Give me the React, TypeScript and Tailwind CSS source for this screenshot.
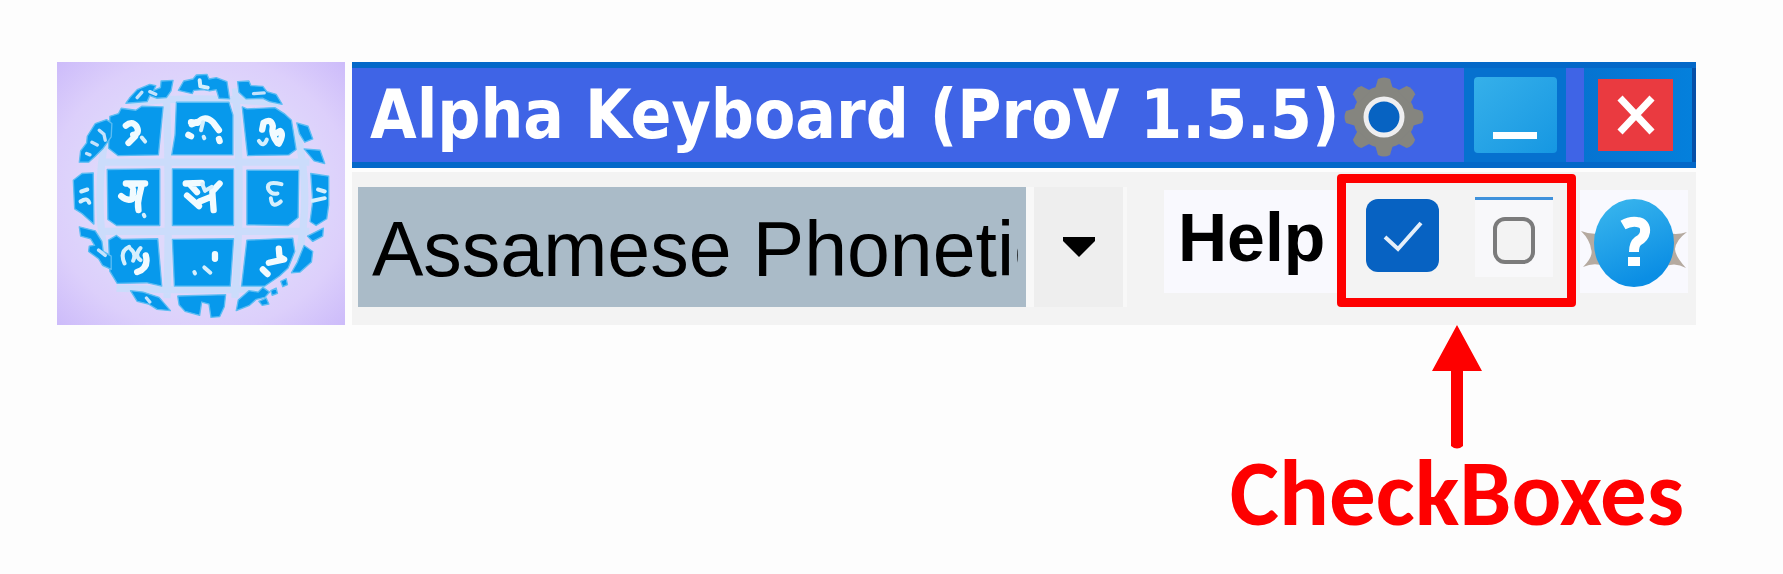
import { useState } from 'react';

const tiles = [
  // outer ring, top
  'M228 145 L240 128 262 104 300 88 318 92 312 106 332 98 334 78 370 76 364 108 350 128 322 130 300 122 292 140Z',
  'M386 106 L402 78 430 72 440 60 472 58 478 72 500 68 532 80 540 132 508 130 500 104 480 108 462 104 432 106 428 116Z',
  'M564 80 L598 78 604 92 640 94 652 110 680 118 698 148 660 140 640 130 590 132 568 112Z',
  // middle tiles
  'M180 184 L206 176 214 160 258 166 276 154 340 156 326 300 204 302 176 280Z',
  'M380 142 L538 142 550 180 550 300 366 300 376 240Z',
  'M578 156 L592 162 676 158 704 176 726 196 740 284 718 300 594 302Z',
  'M172 344 L330 342 330 512 200 512 174 494Z',
  'M368 342 L552 342 552 512 368 512Z',
  'M592 346 L748 346 746 488 716 512 592 510Z',
  'M176 556 L200 542 216 554 324 552 336 694 290 684 202 686 180 650Z',
  'M368 554 L552 552 542 694 374 694Z',
  'M592 556 L730 550 736 590 716 640 690 664 646 694 576 694Z',
  // outer ring, sides
  'M88 322 L92 288 110 264 112 244 136 206 170 194 186 206 184 246 160 280 136 304 116 322Z',
  'M70 376 L96 356 130 354 132 508 96 476 74 462Z',
  'M88 516 L136 528 156 560 160 590 184 604 184 644 158 632 146 612 116 590 118 574 134 572 122 552 92 544Z',
  'M742 204 L776 214 790 252 766 262 750 236Z',
  'M764 282 L812 286 826 326 794 318Z',
  'M784 356 L838 364 838 450 832 492 800 512 782 500 790 440Z',
  'M774 544 L822 520 820 544 790 560Z',
  'M764 572 L790 590 786 622 752 652 726 654 744 622Z',
  // outer ring, bottom
  'M242 708 L280 712 328 728 362 768 322 764 296 748 262 740Z',
  'M384 724 L528 720 524 756 510 786 484 788 478 748 456 742 450 782 406 770 388 750Z',
  'M560 768 L566 736 598 708 626 712 640 698 660 712 646 728 620 734 600 752Z',
  'M628 740 L650 730 658 748 638 752Z M664 708 L680 700 684 716 668 722Z M694 680 L710 672 714 690 700 696Z',
];

const marks = [
  'M228 212 Q246 196 260 214 Q272 236 250 240 M256 244 L236 264',
  'M424 202 L444 204 Q466 178 490 202 L508 226 M446 200 L426 208 M416 240 L424 244 M508 252 L510 258',
  'M638 224 L642 204 Q664 188 670 214 Q664 240 684 264 M688 266 Q704 238 692 228 L682 234',
  'M228 386 L286 386 M236 386 L248 396 M276 390 L268 424 Q262 446 266 466 M214 424 Q232 440 248 432 L250 406',
  'M408 386 L456 384 M510 386 L488 410 490 440 492 466 M420 388 L442 412 M412 422 L448 454 M450 440 L484 426',
  'M262 652 Q298 640 288 602',
  'M496 598 L496 612',
  'M688 582 L690 606 704 614 658 624 M640 644 L654 658',
];

const fineMarks = [
  'M276 248 L286 260 M282 480 L284 484',
  'M460 202 L454 226 M462 246 L464 250',
  'M628 258 Q642 280 652 254',
  'M458 388 L466 408 L486 396',
  'M696 388 Q650 376 656 402 Q664 420 684 416 M664 430 Q668 464 694 440',
  'M238 576 Q208 590 224 626 M242 582 Q260 596 250 618 M272 580 Q252 602 272 616',
  'M464 638 L482 654 M434 652 L436 656',
  'M94 410 L112 404 M92 440 Q112 426 118 444 M450 76 L452 94 474 98 M806 404 L826 410 M790 438 L826 430',
];

function GlobeLogo() {
  return (
    <svg viewBox="21 21 866 790" preserveAspectRatio="none" className="block h-[263px] w-[288px] shrink-0" role="img" aria-label="Alpha Keyboard">
      <defs>
        <radialGradient id="backdrop" r="0.7">
          <stop offset="0.5" stopColor="#dfd9fb" />
          <stop offset="0.75" stopColor="#dccffb" />
          <stop offset="1" stopColor="#cdbcfa" />
        </radialGradient>
      </defs>
      <rect x="21" y="21" width="866" height="790" fill="url(#backdrop)" />
      <path
        d="M350 110 Q360 420 352 730 M558 100 Q580 420 556 730 M150 322 H780 M150 530 H780 M240 142 Q460 120 690 146 M200 700 Q460 710 650 700 M170 230 Q130 420 170 640 M740 220 Q790 420 744 620"
        fill="none"
        stroke="#cbdcfb"
        strokeWidth="22"
      />
      <g fill="#0799ec" stroke="#5cbdf3" strokeWidth="4" strokeLinejoin="round">
        {tiles.map((d) => (
          <path key={d} d={d} />
        ))}
      </g>
      <g fill="none" stroke="#f1fbff" strokeLinecap="round" strokeLinejoin="round">
        {marks.map((d) => (
          <path key={d} d={d} strokeWidth="19" />
        ))}
        {fineMarks.map((d) => (
          <path key={d} d={d} strokeWidth="12" stroke="#d5effd" />
        ))}
      </g>
      <path
        d="M262 128 L276 112 M300 110 L318 118 M126 262 L142 270 M148 226 L162 238 166 256 M110 296 L120 300 M612 116 L644 114 M146 586 L166 602 M290 730 L300 742"
        fill="none"
        stroke="#c4e2fc"
        strokeWidth="10"
        strokeLinecap="round"
      />
    </svg>
  );
}

function GearIcon() {
  return (
    <svg viewBox="0 0 80 80" className="block size-20">
      <g fill="#85857f">
        <circle cx="40" cy="40" r="31" />
        {[0, 45, 90, 135, 180, 225, 270, 315].map((angle) => (
          <path key={angle} d="M31 12 L34 2 Q40 -1 46 2 L49 12Z" transform={`rotate(${angle} 40 40)`} />
        ))}
      </g>
      <circle cx="40" cy="40" r="18" fill="#0763c2" stroke="#eeeef0" strokeWidth="5" />
    </svg>
  );
}

function TitleBar() {
  return (
    <header className="flex h-[106px] border-y-[6px] border-[#0468c8] bg-[#3f64e6]">
      <h1 className="ml-[18px] min-w-0 flex-1 overflow-hidden whitespace-nowrap font-['DejaVu_Sans_Condensed','DejaVu_Sans',sans-serif] text-[67px] leading-[94px] font-bold text-white">
        Alpha Keyboard (ProV 1.5.5)
      </h1>
      <button type="button" aria-label="Settings" className="mr-10 ml-1 flex shrink-0 items-center pt-1">
        <GearIcon />
      </button>
      <div className="flex w-[102px] shrink-0 items-center justify-center bg-[#0671cf]">
        <button type="button" aria-label="Minimize" className="flex h-[76px] w-[83px] items-end justify-center rounded bg-linear-to-br from-[#35b0ea] to-[#1597e2] pb-3.5">
          <span className="h-[7px] w-11 bg-white" />
        </button>
      </div>
      <div className="flex shrink-0 items-center border-r-4 border-[#0750a8] bg-linear-to-r from-[#0671cf] to-[#0480dc] pr-[19px] pl-8 shadow-[inset_18px_0_0_#3f64e6]">
        <button type="button" aria-label="Close" className="flex h-[72px] w-[75px] items-center justify-center bg-[#ea3a40]">
          <svg viewBox="0 0 40 40" className="size-10">
            <path d="M4 3 L36 37 M36 3 L4 37" stroke="#fff" strokeWidth="7" />
          </svg>
        </button>
      </div>
    </header>
  );
}

function LayoutPicker() {
  return (
    <div className="flex min-w-0 flex-1 gap-2 bg-[#f8f8f8] pr-1">
      <select
        aria-label="Keyboard layout"
        className="h-[120px] min-w-0 flex-1 appearance-none overflow-hidden border-r-8 border-[#aabbc8] bg-[#aabbc8] pt-1 pl-3.5 font-['Liberation_Sans',Arial,sans-serif] text-[77px] leading-[116px] text-black"
      >
        <option>Assamese Phonetic</option>
      </select>
      <button type="button" aria-label="Show layouts" className="flex h-[120px] w-[89px] shrink-0 items-center justify-center bg-[#eeeeee]">
        <svg viewBox="0 0 32 20" className="h-5 w-8">
          <path d="M0 0 H32 V4 L16 20 L0 4Z" fill="#000" />
        </svg>
      </button>
    </div>
  );
}

function CheckBoxes() {
  const [enabled, setEnabled] = useState(true);
  const [secondary, setSecondary] = useState(false);

  return (
    <div className="flex h-[133px] w-[239px] shrink-0 items-start rounded border-[9px] border-[#fe0000] pt-3.5 pl-5">
      <label className="relative mt-0.5 block size-[73px]">
        <input
          type="checkbox"
          aria-label="Enable keyboard"
          checked={enabled}
          onChange={(e) => setEnabled(e.target.checked)}
          className="block size-full appearance-none rounded-xl bg-white checked:bg-[#0762c2]"
        />
        <svg viewBox="0 0 73 73" className="pointer-events-none absolute inset-0">
          <path d="M19 38 L32 50 L55 24" fill="none" stroke="#e4effa" strokeWidth="4" />
        </svg>
      </label>
      <label className="ml-9 flex h-20 w-[78px] justify-center border-t-[3px] border-[#3f92dc] bg-[#f8f8fa] pt-[17px]">
        <input
          type="checkbox"
          aria-label="Show hints"
          checked={secondary}
          onChange={(e) => setSecondary(e.target.checked)}
          className="block h-[47px] w-[42px] appearance-none rounded-xl border-4 border-[#7b7b7b] bg-[#f3f3f3] checked:bg-[#0762c2]"
        />
      </label>
    </div>
  );
}

function HelpButton() {
  return (
    <button type="button" aria-label="Help" className="mr-2 ml-1 flex h-[103px] w-[108px] shrink-0 items-center bg-[#f9f9fe]">
      <svg viewBox="0 0 108 103" className="block">
        <defs>
          <linearGradient id="badge" x1="0" y1="0" x2="0.4" y2="1">
            <stop offset="0" stopColor="#3cb8ee" />
            <stop offset="1" stopColor="#0b8ee4" />
          </linearGradient>
        </defs>
        <path d="M1 41 Q14 46 24 42 V76 Q14 72 3 77 Q14 66 11 59 Q10 50 1 41Z M107 42 Q95 46 86 42 V76 Q96 72 106 78 Q95 66 95 59 Q96 50 107 42Z" fill="#b5aaa0" />
        <ellipse cx="54" cy="53" rx="40" ry="44" fill="url(#badge)" />
        <path d="M43 35 Q50 31 57 32 Q66 33 65 42 Q64 48 58 51 Q54 54 54 62" fill="none" stroke="#fff" strokeWidth="10" />
        <path d="M48 67 H60 V76 H48Z" fill="#fff" />
      </svg>
    </button>
  );
}

function Annotation() {
  return (
    <div className="mr-[99px] ml-auto flex w-fit flex-col items-center text-[#fe0000]">
      <svg viewBox="0 0 50 124" className="block h-[124px] w-[50px]">
        <path d="M25 0 L50 46 H31 V121 Q25 126 19 121 V46 H0Z" fill="currentColor" />
      </svg>
      <p className="font-['Carlito','Lato',sans-serif] text-[93px] leading-[88px] font-bold">CheckBoxes</p>
    </div>
  );
}

export default function App() {
  return (
    <main className="min-h-screen bg-[#fdfdfd] pt-[62px]">
      <div className="mr-[87px] ml-[57px] flex gap-[7px]">
        <GlobeLogo />
        <div className="min-w-0 flex-1">
          <TitleBar />
          <div className="mt-1 flex h-[153px] bg-[#f3f3f3] pt-0.5 pl-1.5">
            <div className="flex min-w-0 flex-1 items-start pt-[13px]">
              <LayoutPicker />
            </div>
            <div className="mt-4 ml-[37px] h-[103px] w-[173px] shrink-0 bg-[#f9f9fe] pl-3.5 font-['Liberation_Sans',Arial,sans-serif] text-[68px] leading-[94px] font-bold text-black">
              Help
            </div>
            <CheckBoxes />
            <div className="pt-4">
              <HelpButton />
            </div>
          </div>
        </div>
      </div>
      <Annotation />
    </main>
  );
}
